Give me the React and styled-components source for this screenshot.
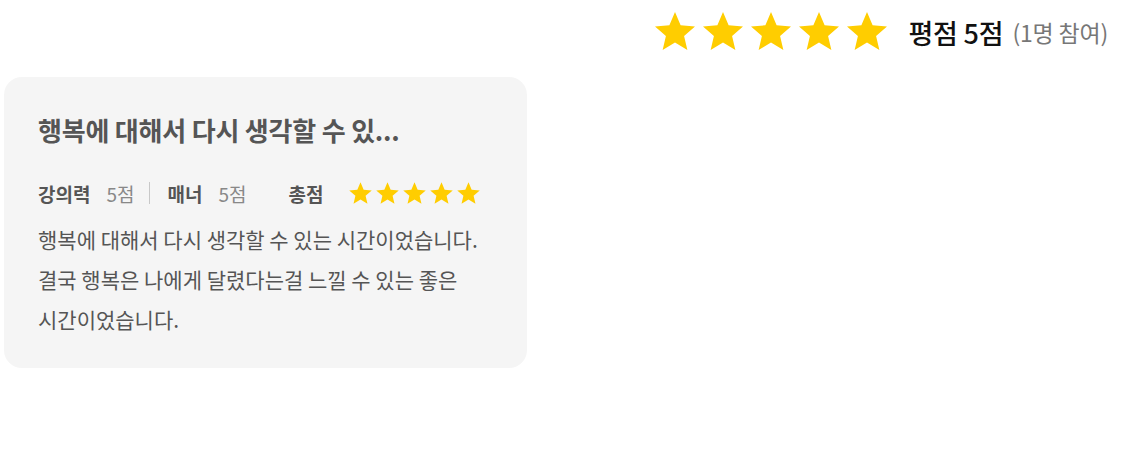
import React from "react";
import styled, { createGlobalStyle } from "styled-components";

const GlobalStyle = createGlobalStyle`
  html, body { margin: 0; padding: 0; background: #fff; }
  body { font-family: "Noto Sans CJK KR", "Noto Sans", sans-serif; }
  * { box-sizing: border-box; }
`;

const Page = styled.div`
  width: 1124px;
  padding: 8px 16px 0 4px;
  display: flex;
  flex-direction: column;
`;

const Summary = styled.div`
  display: flex;
  justify-content: flex-end;
  align-items: center;
  height: 48px;
`;

const StarRow = styled.div`
  display: flex;
  align-items: center;
  margin-left: ${(p) => p.$ml || 0}px;
`;

const Score = styled.span`
  margin-left: 17px;
  font-size: 27px;
  font-weight: 500;
  color: #111;
  letter-spacing: -0.2px;
`;

const Count = styled.span`
  margin-left: 9px;
  font-size: 23px;
  color: #777;
  letter-spacing: -0.2px;
`;

const Card = styled.div`
  margin-top: 21px;
  width: 523px;
  background: #f5f5f5;
  border-radius: 18px;
  padding: 36px 34px 29px;
  display: flex;
  flex-direction: column;
`;

const Title = styled.h3`
  margin: 0;
  font-size: 26px;
  line-height: 34px;
  font-weight: 700;
  color: #555;
  letter-spacing: -0.2px;
`;

const Meta = styled.div`
  margin-top: 34px;
  display: flex;
  align-items: center;
  height: 24px;
  font-size: 19px;
  letter-spacing: 0;
`;

const Label = styled.span`
  font-weight: 700;
  color: #555;
  margin-left: ${(p) => p.$ml || 0}px;
`;

const Value = styled.span`
  color: #888;
  margin-left: 16px;
`;

const Divider = styled.span`
  width: 1px;
  height: 22px;
  background: #c8c8c8;
  margin: 0 17px 0 15px;
`;

const Body = styled.p`
  margin: 14px 0 0;
  font-size: 21px;
  line-height: 40px;
  color: #555;
  letter-spacing: 0;
`;

const Star = ({ size }) => (
  <svg width={size} height={size} viewBox="0 0 24 24" aria-hidden="true">
    <path
      fill="#FFCD00"
      d="M12 17.27L18.18 21l-1.64-7.03L22 9.24l-7.19-.61L12 2 9.19 8.63 2 9.24l5.46 4.73L5.82 21z"
    />
  </svg>
);

const Stars = ({ size, ml }) => (
  <StarRow $ml={ml}>
    {[0, 1, 2, 3, 4].map((i) => (
      <Star key={i} size={size} />
    ))}
  </StarRow>
);

export default function App() {
  return (
    <>
      <GlobalStyle />
      <Page>
        <Summary>
          <Stars size={48} />
          <Score>평점 5점</Score>
          <Count>(1명 참여)</Count>
        </Summary>
        <Card>
          <Title>행복에 대해서 다시 생각할 수 있...</Title>
          <Meta>
            <Label>강의력</Label>
            <Value>5점</Value>
            <Divider />
            <Label>매너</Label>
            <Value>5점</Value>
            <Label $ml={42}>총점</Label>
            <Stars size={27} ml={24} />
          </Meta>
          <Body>
            행복에 대해서 다시 생각할 수 있는 시간이었습니다.
            <br />
            결국 행복은 나에게 달렸다는걸 느낄 수 있는 좋은
            <br />
            시간이었습니다.
          </Body>
        </Card>
      </Page>
    </>
  );
}
